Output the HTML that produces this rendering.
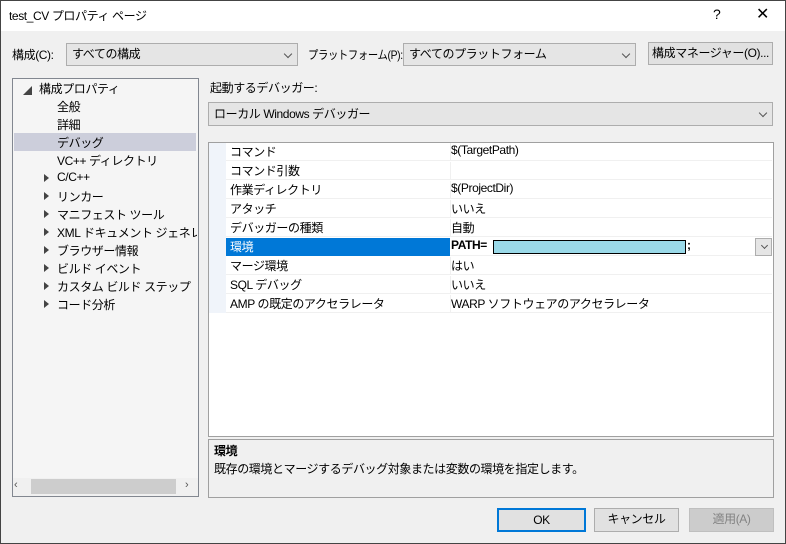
<!DOCTYPE html>
<html><head><meta charset="utf-8"><style>
*{box-sizing:border-box;margin:0;padding:0}
body{width:786px;height:544px;background:#f0f0f0;font-family:"Liberation Sans","Noto Sans CJK JP",sans-serif;font-size:12px;letter-spacing:-0.4px;color:#000;position:relative;overflow:hidden}
.a{position:absolute;white-space:nowrap}
.win{position:absolute;left:0;top:0;width:786px;height:544px;border:1px solid #444}
.combo{position:absolute;background:#e5e5e5;border:1px solid #adadad;padding:3px 5px;line-height:15px}
.chev{position:absolute;right:6px;top:7px;width:6px;height:6px;border-right:1px solid #555;border-bottom:1px solid #555;transform:rotate(45deg)}
.btn{position:absolute;background:#e1e1e1;border:1px solid #adadad;text-align:center;line-height:21px}
.tri{position:absolute;width:0;height:0;border-top:4px solid transparent;border-bottom:4px solid transparent;border-left:5px solid #444}
.row{position:absolute;left:226px;width:546px;height:18px;border-bottom:1px solid #f0f0f0}
.row .n{position:absolute;left:4px;top:0px}
.row .v{position:absolute;left:225px;top:0px}
.row .sep{position:absolute;left:224px;top:0;width:1px;height:18px;background:#f0f0f0}
</style></head><body>
<div class="win"></div>
<div class="a" style="left:1px;top:1px;width:784px;height:30px;background:#fff"></div>
<div class="a" style="left:9px;top:7px;font-size:12px">test_CV プロパティ ページ</div>
<div class="a" style="left:713px;top:6px;font-size:14px">?</div>
<div class="a" style="left:756px;top:4px;font-size:16px">✕</div>

<div class="a" style="left:12px;top:46px">構成(C):</div>
<div class="combo" style="left:66px;top:43px;width:232px;height:23px">すべての構成<div class="chev"></div></div>
<div class="a" style="left:308px;top:46px;transform:scaleX(0.86);transform-origin:0 0;letter-spacing:-0.4px">プラットフォーム(P):</div>
<div class="combo" style="left:403px;top:43px;width:233px;height:23px">すべてのプラットフォーム<div class="chev"></div></div>
<div class="btn" style="left:648px;top:42px;width:125px;height:23px">構成マネージャー(O)...</div>

<div class="a" style="left:12px;top:78px;width:187px;height:419px;border:1px solid #828790;background:#f5f5f5"></div>
<div class="a" style="left:14px;top:133px;width:182px;height:18px;background:#cccedb"></div>
<div class="a" style="left:23px;top:84px;font-size:9px;color:#444">◢</div>
<div class="a" style="left:39px;top:80px">構成プロパティ</div>
<div class="a" style="left:57px;top:98px">全般</div>
<div class="a" style="left:57px;top:116px">詳細</div>
<div class="a" style="left:57px;top:134px">デバッグ</div>
<div class="a" style="left:57px;top:152px">VC++ ディレクトリ</div>
<div class="tri" style="left:44px;top:174px"></div><div class="a" style="left:57px;top:170px">C/C++</div>
<div class="tri" style="left:44px;top:192px"></div><div class="a" style="left:57px;top:188px">リンカー</div>
<div class="tri" style="left:44px;top:210px"></div><div class="a" style="left:57px;top:206px">マニフェスト ツール</div>
<div class="tri" style="left:44px;top:228px"></div><div class="a" style="left:57px;top:224px;width:140px;overflow:hidden">XML ドキュメント ジェネレーター</div>
<div class="tri" style="left:44px;top:246px"></div><div class="a" style="left:57px;top:242px">ブラウザー情報</div>
<div class="tri" style="left:44px;top:264px"></div><div class="a" style="left:57px;top:260px">ビルド イベント</div>
<div class="tri" style="left:44px;top:282px"></div><div class="a" style="left:57px;top:278px">カスタム ビルド ステップ</div>
<div class="tri" style="left:44px;top:300px"></div><div class="a" style="left:57px;top:296px">コード分析</div>
<div class="a" style="left:13px;top:478px;width:185px;height:18px;background:#f0f0f0"></div>
<div class="a" style="left:31px;top:479px;width:145px;height:15px;background:#cdcdcd"></div>
<div class="a" style="left:14px;top:479px;font-size:11px;color:#555">‹</div>
<div class="a" style="left:185px;top:479px;font-size:11px;color:#555">›</div>

<div class="a" style="left:210px;top:79px">起動するデバッガー:</div>
<div class="combo" style="left:208px;top:102px;width:565px;height:24px;padding-top:4px">ローカル Windows デバッガー<div class="chev"></div></div>

<div class="a" style="left:208px;top:142px;width:566px;height:295px;border:1px solid #a0a0a0;background:#fff"></div>
<div class="a" style="left:209px;top:143px;width:17px;height:170px;background:#f0f4fa"></div>
<div class="row" style="top:143px"><span class="n">コマンド</span><div class="sep"></div><span class="v">$(TargetPath)</span></div>
<div class="row" style="top:162px"><span class="n">コマンド引数</span><div class="sep"></div></div>
<div class="row" style="top:181px"><span class="n">作業ディレクトリ</span><div class="sep"></div><span class="v">$(ProjectDir)</span></div>
<div class="row" style="top:200px"><span class="n">アタッチ</span><div class="sep"></div><span class="v">いいえ</span></div>
<div class="row" style="top:219px"><span class="n">デバッガーの種類</span><div class="sep"></div><span class="v">自動</span></div>
<div class="row" style="top:238px"><div class="a" style="left:0;top:0;width:224px;height:18px;background:#0078d7"></div><span class="n" style="color:#fff">環境</span><span class="v" style="font-weight:bold">PATH=</span>
<div class="a" style="left:267px;top:2px;width:193px;height:14px;background:#9ad9e8;border:1px solid #000"></div><span class="a" style="left:461px;top:0px;font-weight:bold">;</span>
<div class="a" style="left:529px;top:0;width:17px;height:18px;background:#e5e5e5;border:1px solid #adadad"><div class="chev" style="right:4px;top:4px;width:5px;height:5px"></div></div></div>
<div class="row" style="top:257px"><span class="n">マージ環境</span><div class="sep"></div><span class="v">はい</span></div>
<div class="row" style="top:276px"><span class="n">SQL デバッグ</span><div class="sep"></div><span class="v">いいえ</span></div>
<div class="row" style="top:295px"><span class="n">AMP の既定のアクセラレータ</span><div class="sep"></div><span class="v">WARP ソフトウェアのアクセラレータ</span></div>

<div class="a" style="left:208px;top:439px;width:566px;height:59px;border:1px solid #a0a0a0;background:#f0f0f0"></div>
<div class="a" style="left:214px;top:442px;font-weight:bold">環境</div>
<div class="a" style="left:214px;top:460px">既存の環境とマージするデバッグ対象または変数の環境を指定します。</div>

<div class="btn" style="left:497px;top:508px;width:89px;height:24px;border:2px solid #0078d7">OK</div>
<div class="btn" style="left:594px;top:508px;width:85px;height:24px">キャンセル</div>
<div class="btn" style="left:689px;top:508px;width:85px;height:24px;background:#cccccc;border-color:#bfbfbf;color:#838383">適用(A)</div>
</body></html>
